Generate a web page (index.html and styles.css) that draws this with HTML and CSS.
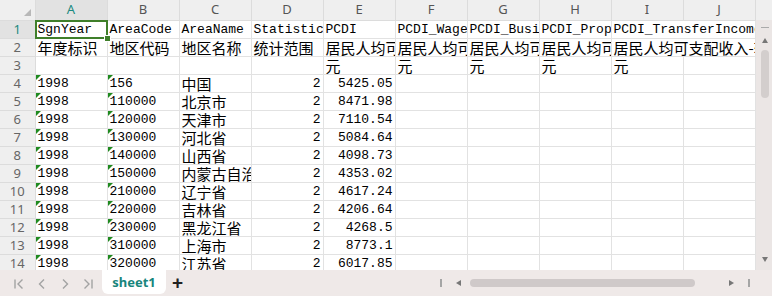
FILE: index.html
```html
<!doctype html>
<html lang="zh-CN">
<head>
  <meta charset="UTF-8">
  <title>sheet1</title>
  <link rel="stylesheet" href="styles.css">
</head>
<body>
  <div class="app">
    <div class="main">
      <table class="sheet">
        <colgroup>
          <col class="col-head">
          <col><col><col><col><col><col><col><col><col><col>
        </colgroup>
        <thead>
          <tr class="col-letters">
            <th class="corner"></th>
            <th class="active">A</th><th>B</th><th>C</th><th>D</th><th>E</th>
            <th>F</th><th>G</th><th>H</th><th>I</th><th>J</th>
          </tr>
        </thead>
        <tbody>
          <tr>
            <th class="active">1</th>
            <td class="selected">SgnYear</td><td>AreaCode</td><td>AreaName</td><td>StatisticalScope</td>
            <td>PCDI</td><td>PCDI_WageIncome</td><td>PCDI_BusinessIncome</td><td>PCDI_PropertyIncome</td>
            <td colspan="2">PCDI_TransferIncome</td>
          </tr>
          <tr>
            <th>2</th>
            <td class="zh">年度标识</td><td class="zh">地区代码</td><td class="zh">地区名称</td><td class="zh">统计范围</td>
            <td class="zh">居民人均可支配收入(元)</td><td class="zh">居民人均可支配收入-工资性收入</td>
            <td class="zh">居民人均可支配收入-经营净收入</td><td class="zh">居民人均可支配收入-财产净收入</td>
            <td class="zh" colspan="2">居民人均可支配收入-转移净收入</td>
          </tr>
          <tr>
            <th>3</th>
            <td></td><td></td><td></td><td></td>
            <td class="zh">元</td><td class="zh">元</td><td class="zh">元</td><td class="zh">元</td><td class="zh">元</td><td></td>
          </tr>
          <tr><th>4</th><td class="txt">1998</td><td class="txt">156</td><td class="zh">中国</td><td class="num">2</td><td class="num">5425.05</td><td></td><td></td><td></td><td></td><td></td></tr>
          <tr><th>5</th><td class="txt">1998</td><td class="txt">110000</td><td class="zh">北京市</td><td class="num">2</td><td class="num">8471.98</td><td></td><td></td><td></td><td></td><td></td></tr>
          <tr><th>6</th><td class="txt">1998</td><td class="txt">120000</td><td class="zh">天津市</td><td class="num">2</td><td class="num">7110.54</td><td></td><td></td><td></td><td></td><td></td></tr>
          <tr><th>7</th><td class="txt">1998</td><td class="txt">130000</td><td class="zh">河北省</td><td class="num">2</td><td class="num">5084.64</td><td></td><td></td><td></td><td></td><td></td></tr>
          <tr><th>8</th><td class="txt">1998</td><td class="txt">140000</td><td class="zh">山西省</td><td class="num">2</td><td class="num">4098.73</td><td></td><td></td><td></td><td></td><td></td></tr>
          <tr><th>9</th><td class="txt">1998</td><td class="txt">150000</td><td class="zh">内蒙古自治区</td><td class="num">2</td><td class="num">4353.02</td><td></td><td></td><td></td><td></td><td></td></tr>
          <tr><th>10</th><td class="txt">1998</td><td class="txt">210000</td><td class="zh">辽宁省</td><td class="num">2</td><td class="num">4617.24</td><td></td><td></td><td></td><td></td><td></td></tr>
          <tr><th>11</th><td class="txt">1998</td><td class="txt">220000</td><td class="zh">吉林省</td><td class="num">2</td><td class="num">4206.64</td><td></td><td></td><td></td><td></td><td></td></tr>
          <tr><th>12</th><td class="txt">1998</td><td class="txt">230000</td><td class="zh">黑龙江省</td><td class="num">2</td><td class="num">4268.5</td><td></td><td></td><td></td><td></td><td></td></tr>
          <tr><th>13</th><td class="txt">1998</td><td class="txt">310000</td><td class="zh">上海市</td><td class="num">2</td><td class="num">8773.1</td><td></td><td></td><td></td><td></td><td></td></tr>
          <tr><th>14</th><td class="txt">1998</td><td class="txt">320000</td><td class="zh">江苏省</td><td class="num">2</td><td class="num">6017.85</td><td></td><td></td><td></td><td></td><td></td></tr>
          <tr><th>15</th><td class="txt">1998</td><td class="txt">330000</td><td class="zh">浙江省</td><td class="num">2</td><td class="num">7836.76</td><td></td><td></td><td></td><td></td><td></td></tr>
        </tbody>
      </table>
      <div class="vscroll">
        <div class="vscroll-top"></div>
        <div class="vscroll-track">
          <span class="vs-line"></span>
          <span class="vs-up"></span>
          <span class="vs-thumb"></span>
          <span class="vs-down"></span>
        </div>
      </div>
    </div>
    <div class="tabbar">
      <div class="nav">
        <svg width="12" height="12" viewBox="0 0 12 12"><path d="M2 1.5v9M9.5 1.5L5 6l4.5 4.5" /></svg>
        <svg width="12" height="12" viewBox="0 0 12 12"><path d="M8 1.5L3.5 6 8 10.5" /></svg>
        <svg width="12" height="12" viewBox="0 0 12 12"><path d="M4 1.5L8.5 6 4 10.5" /></svg>
        <svg width="12" height="12" viewBox="0 0 12 12"><path d="M2.5 1.5L7 6l-4.5 4.5M10 1.5v9" /></svg>
      </div>
      <div class="tab">sheet1</div>
      <div class="add-sheet">+</div>
      <div class="hscroll">
        <span class="hs-bar"></span>
        <span class="hs-left"></span>
        <span class="hs-thumb"></span>
        <span class="hs-right"></span>
        <span class="hs-bar"></span>
      </div>
    </div>
  </div>
</body>
</html>
```

FILE: styles.css
```css
body {
  margin: 0;
  background: #fff;
  font-family: "Liberation Mono", "Noto Sans CJK SC", monospace;
}

.app {
  width: 772px;
  height: 296px;
  display: flex;
  flex-direction: column;
  overflow: hidden;
}

.main {
  height: 270px;
  display: flex;
  overflow: hidden;
}

/* 表格本体 */
.sheet {
  width: 755px;
  flex: none;
  table-layout: fixed;
  border-collapse: collapse;
  align-self: flex-start;
}

.sheet col {
  width: 72px;
}

.sheet col.col-head {
  width: 35px;
}

.sheet tr {
  height: 18px;
}

.sheet tr.col-letters {
  height: 20px;
}

.sheet th {
  background: #efefef;
  color: #666;
  font-family: "Noto Sans", "Liberation Sans", sans-serif;
  font-weight: normal;
  font-size: 13px;
  line-height: 17px;
  padding: 0;
  border-right: 1px solid #dcdcdc;
  border-bottom: 1px solid #dcdcdc;
}

.col-letters th {
  line-height: 19px;
  color: #555;
}

.sheet th.active {
  background: #e2e2e2;
  color: #1b8a80;
}

.sheet th.corner {
  position: relative;
}

.sheet th.corner::after {
  content: "";
  position: absolute;
  right: 4px;
  bottom: 4px;
  border-style: solid;
  border-width: 0 0 7px 7px;
  border-color: transparent transparent #b8b8b8 transparent;
}

.sheet td {
  position: relative;
  padding: 0 2px;
  font-size: 13px;
  line-height: 17px;
  color: #000;
  white-space: nowrap;
  overflow: hidden;
  border-right: 1px solid #e2e2e2;
  border-bottom: 1px solid #e2e2e2;
}

.sheet td.zh {
  font-family: "Noto Sans CJK SC", sans-serif;
  font-size: 15px;
}

.sheet td.num {
  text-align: right;
}

/* 以文本存储的数字：左上角的绿色小三角 */
.sheet td.txt::before {
  content: "";
  position: absolute;
  left: 0;
  top: 0;
  border-style: solid;
  border-width: 5px 5px 0 0;
  border-color: #1f8a1f transparent transparent transparent;
}

.sheet td.selected {
  overflow: visible;
}

.sheet td.selected::after {
  content: "";
  position: absolute;
  left: -1px;
  top: -1px;
  right: -1px;
  bottom: -1px;
  border: 2px solid #3f7f2a;
  pointer-events: none;
}

.sheet td.selected::before {
  content: "";
  position: absolute;
  right: -4px;
  bottom: -4px;
  width: 5px;
  height: 5px;
  background: #3f7f2a;
  border: 1px solid #fff;
  z-index: 1;
}

/* 垂直滚动条 */
.vscroll {
  width: 17px;
  flex: none;
  display: flex;
  flex-direction: column;
}

.vscroll-top {
  height: 20px;
  background: #efefef;
}

.vscroll-track {
  flex: 1;
  background: #ebe6e5;
  display: flex;
  flex-direction: column;
  align-items: center;
  padding-top: 7px;
}

.vs-line {
  width: 8px;
  height: 1px;
  background: #aaa;
  margin-left: 2px;
}

.vs-up {
  margin: 10px 0 0 2px;
  border-style: solid;
  border-width: 0 3px 5px 3px;
  border-color: transparent transparent #777 transparent;
}

.vs-thumb {
  width: 8px;
  height: 48px;
  margin: 7px 0 0 2px;
  border-radius: 4px;
  background: #d3cecd;
}

.vs-down {
  margin: auto 0 8px 2px;
  border-style: solid;
  border-width: 5px 3px 0 3px;
  border-color: #777 transparent transparent transparent;
}

/* 底部工作表标签栏 */
.tabbar {
  flex: 1;
  background: #efe9e8;
  display: flex;
  align-items: flex-start;
}

.nav {
  display: flex;
  gap: 11px;
  padding: 8px 0 0 13px;
  width: 89px;
}

.nav svg {
  fill: none;
  stroke: #a3a3a3;
  stroke-width: 1.4;
}

.tab {
  width: 64px;
  height: 24px;
  background: #fff;
  border-radius: 0 0 6px 6px;
  color: #17857c;
  font-family: "Noto Sans", "Liberation Sans", sans-serif;
  font-weight: bold;
  font-size: 13px;
  line-height: 25px;
  text-align: center;
}

.add-sheet {
  margin-left: 6px;
  color: #222;
  font-family: "Liberation Sans", sans-serif;
  font-size: 19px;
  font-weight: bold;
  line-height: 25px;
}

.hscroll {
  margin-left: auto;
  width: 332px;
  height: 26px;
  display: flex;
  align-items: center;
  padding-right: 7px;
  box-sizing: border-box;
}

.hs-bar {
  width: 2px;
  height: 8px;
  background: #a5a5a5;
}

.hs-left {
  margin: 0 9px 0 14px;
  border-style: solid;
  border-width: 3px 5px 3px 0;
  border-color: transparent #777 transparent transparent;
}

.hs-thumb {
  width: 225px;
  height: 8px;
  border-radius: 4px;
  background: #cfc9c9;
}

.hs-right {
  margin: 0 14px 0 34px;
  border-style: solid;
  border-width: 3px 0 3px 5px;
  border-color: transparent transparent transparent #777;
}
```
